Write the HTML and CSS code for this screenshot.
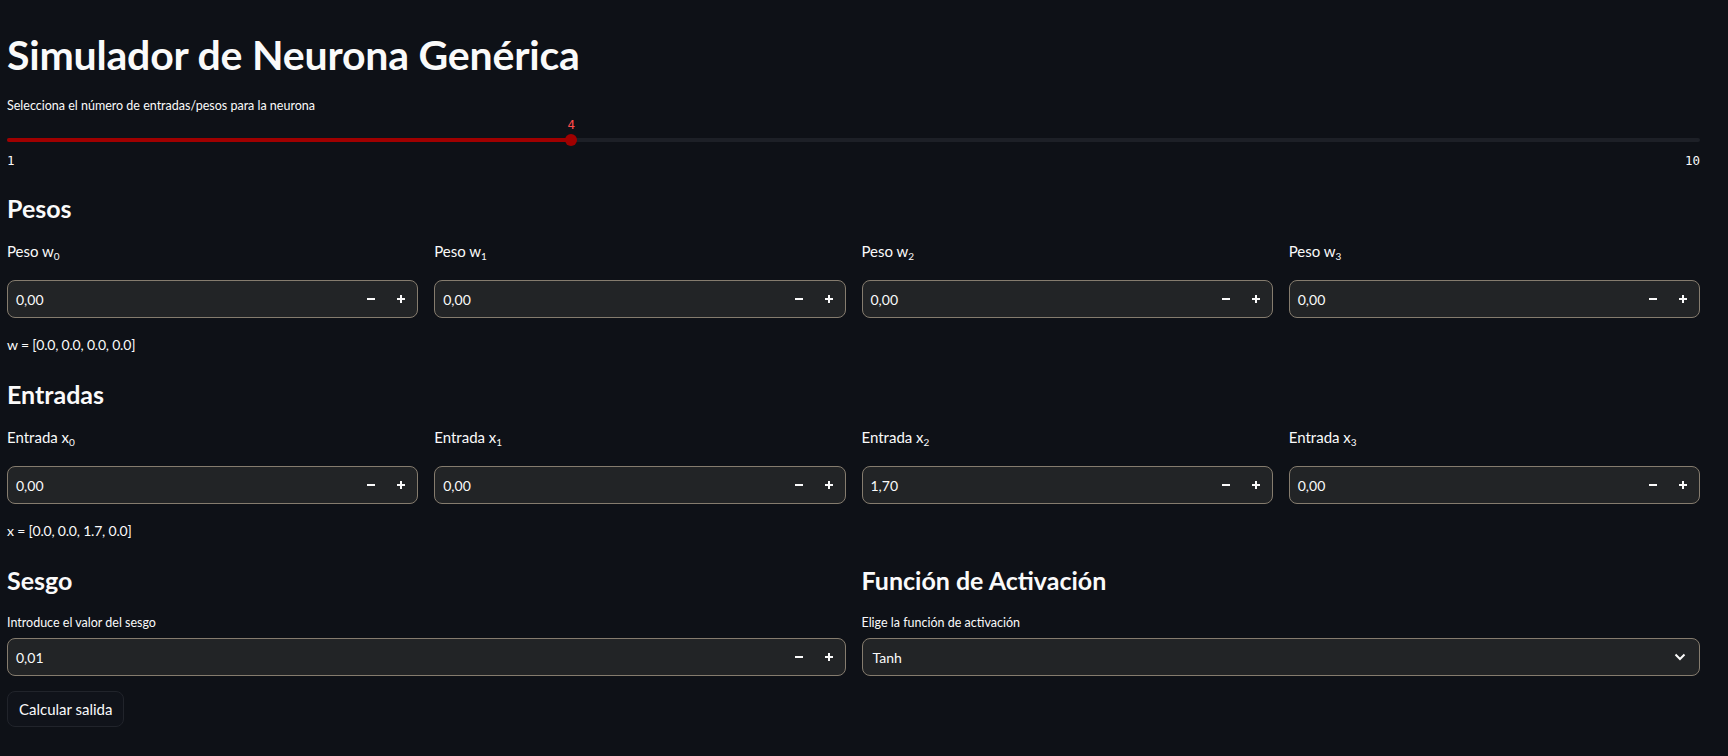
FILE: index.html
```html
<!DOCTYPE html>
<html lang="es">
<head>
<meta charset="utf-8">
<title>Simulador de Neurona Genérica</title>
<link rel="stylesheet" href="styles.css">
</head>
<body>
<main class="app">
  <h1 class="title">Simulador de Neurona Genérica</h1>

  <section class="slider-block">
    <div class="widget-label">Selecciona el número de entradas/pesos para la neurona</div>
    <div class="slider">
      <div class="slider-track">
        <div class="slider-fill" style="width: 33.33%"></div>
        <div class="slider-thumb" style="left: 33.33%">
          <span class="slider-value">4</span>
        </div>
      </div>
    </div>
    <div class="slider-ticks"><span>1</span><span>10</span></div>
  </section>

  <h3 class="section-title">Pesos</h3>
  <div class="grid4">
    <div class="field">
      <div class="md-label">Peso w<sub>0</sub></div>
      <div class="number-input"><span class="value">0,00</span><span class="step minus"><svg viewBox="0 0 10 10"><path d="M1 5h8"/></svg></span><span class="step plus"><svg viewBox="0 0 10 10"><path d="M1 5h8M5 1v8"/></svg></span></div>
    </div>
    <div class="field">
      <div class="md-label">Peso w<sub>1</sub></div>
      <div class="number-input"><span class="value">0,00</span><span class="step minus"><svg viewBox="0 0 10 10"><path d="M1 5h8"/></svg></span><span class="step plus"><svg viewBox="0 0 10 10"><path d="M1 5h8M5 1v8"/></svg></span></div>
    </div>
    <div class="field">
      <div class="md-label">Peso w<sub>2</sub></div>
      <div class="number-input"><span class="value">0,00</span><span class="step minus"><svg viewBox="0 0 10 10"><path d="M1 5h8"/></svg></span><span class="step plus"><svg viewBox="0 0 10 10"><path d="M1 5h8M5 1v8"/></svg></span></div>
    </div>
    <div class="field">
      <div class="md-label">Peso w<sub>3</sub></div>
      <div class="number-input"><span class="value">0,00</span><span class="step minus"><svg viewBox="0 0 10 10"><path d="M1 5h8"/></svg></span><span class="step plus"><svg viewBox="0 0 10 10"><path d="M1 5h8M5 1v8"/></svg></span></div>
    </div>
  </div>
  <p class="vector">w = [0.0, 0.0, 0.0, 0.0]</p>

  <h3 class="section-title">Entradas</h3>
  <div class="grid4">
    <div class="field">
      <div class="md-label">Entrada x<sub>0</sub></div>
      <div class="number-input"><span class="value">0,00</span><span class="step minus"><svg viewBox="0 0 10 10"><path d="M1 5h8"/></svg></span><span class="step plus"><svg viewBox="0 0 10 10"><path d="M1 5h8M5 1v8"/></svg></span></div>
    </div>
    <div class="field">
      <div class="md-label">Entrada x<sub>1</sub></div>
      <div class="number-input"><span class="value">0,00</span><span class="step minus"><svg viewBox="0 0 10 10"><path d="M1 5h8"/></svg></span><span class="step plus"><svg viewBox="0 0 10 10"><path d="M1 5h8M5 1v8"/></svg></span></div>
    </div>
    <div class="field">
      <div class="md-label">Entrada x<sub>2</sub></div>
      <div class="number-input"><span class="value">1,70</span><span class="step minus"><svg viewBox="0 0 10 10"><path d="M1 5h8"/></svg></span><span class="step plus"><svg viewBox="0 0 10 10"><path d="M1 5h8M5 1v8"/></svg></span></div>
    </div>
    <div class="field">
      <div class="md-label">Entrada x<sub>3</sub></div>
      <div class="number-input"><span class="value">0,00</span><span class="step minus"><svg viewBox="0 0 10 10"><path d="M1 5h8"/></svg></span><span class="step plus"><svg viewBox="0 0 10 10"><path d="M1 5h8M5 1v8"/></svg></span></div>
    </div>
  </div>
  <p class="vector">x = [0.0, 0.0, 1.7, 0.0]</p>

  <div class="grid2">
    <div class="col">
      <h3 class="section-title">Sesgo</h3>
      <div class="widget-label">Introduce el valor del sesgo</div>
      <div class="number-input"><span class="value">0,01</span><span class="step minus"><svg viewBox="0 0 10 10"><path d="M1 5h8"/></svg></span><span class="step plus"><svg viewBox="0 0 10 10"><path d="M1 5h8M5 1v8"/></svg></span></div>
    </div>
    <div class="col">
      <h3 class="section-title">Función de Activación</h3>
      <div class="widget-label">Elige la función de activación</div>
      <div class="select"><span class="select-value">Tanh</span><svg class="chevron" viewBox="0 0 12 8"><path d="M1.5 1.5 6 6l4.5-4.5"/></svg></div>
    </div>
  </div>

  <button class="btn" type="button">Calcular salida</button>
</main>
</body>
</html>
```

FILE: styles.css
```css
* { box-sizing: border-box; }

html, body {
  margin: 0;
  padding: 0;
  background: #0e1117;
  color: #fafafa;
  font-family: "Lato", "Noto Sans", sans-serif;
}

.app {
  width: 1728px;
  padding: 24px 28px 40px 7px;
}

.title {
  margin: 0;
  font-size: 41px;
  font-weight: 700;
  line-height: 56px;
  letter-spacing: -0.2px;
  padding-top: 3px;
}

.slider-block {
  margin-top: 14px;
}

.widget-label {
  font-size: 12.5px;
  line-height: 18px;
  height: 18px;
}

.slider {
  height: 33px;
  display: flex;
  align-items: flex-end;
  padding-bottom: 6px;
}

.slider-track {
  position: relative;
  width: 100%;
  height: 4px;
  border-radius: 2px;
  background: #1d2027;
}

.slider-fill {
  height: 100%;
  border-radius: 2px;
  background: #a00000;
}

.slider-thumb {
  position: absolute;
  top: 50%;
  width: 12px;
  height: 12px;
  margin-left: -6px;
  margin-top: -6px;
  border-radius: 50%;
  background: #a00000;
}

.slider-value {
  position: absolute;
  bottom: 14px;
  left: 50%;
  transform: translateX(-50%);
  color: #ff4b4b;
  font-family: "DejaVu Sans Mono", "Liberation Mono", monospace;
  font-size: 12.5px;
  line-height: 14px;
}

.slider-ticks {
  display: flex;
  justify-content: space-between;
  font-family: "DejaVu Sans Mono", "Liberation Mono", monospace;
  font-size: 12.5px;
  line-height: 18px;
  margin-top: 4px;
}

.section-title {
  margin: 0;
  font-size: 25px;
  font-weight: 700;
  line-height: 36px;
}

.slider-block + .section-title { margin-top: 20px; }

.grid4 {
  display: grid;
  grid-template-columns: repeat(4, 1fr);
  gap: 16px;
  margin-top: 14px;
}

.field {
  display: flex;
  flex-direction: column;
}

.md-label {
  font-size: 15px;
  line-height: 22px;
  height: 40px;
}

.md-label sub {
  font-size: 10px;
  line-height: 0;
  vertical-align: -3px;
}

.number-input,
.select {
  display: flex;
  align-items: center;
  height: 38px;
  background: #222426;
  border: 1px solid #857c6e;
  border-radius: 8px;
  font-size: 14px;
}

.number-input .value {
  flex: 1;
  padding-left: 8px;
}

.step {
  display: flex;
  align-items: center;
  justify-content: center;
  width: 30px;
  height: 100%;
}

.step.plus { margin-right: 1px; }

.step svg {
  width: 10px;
  height: 10px;
  stroke: #fafafa;
  stroke-width: 2;
  fill: none;
}

.vector {
  margin: 16px 0 0;
  font-size: 14px;
  letter-spacing: -0.2px;
  line-height: 22px;
}

.vector + .section-title { margin-top: 20px; }
.vector + .grid2 { margin-top: 20px; }

.grid2 {
  display: grid;
  grid-template-columns: 1fr 1fr;
  gap: 16px;
}

.col {
  display: flex;
  flex-direction: column;
}

.col .widget-label {
  margin-top: 16px;
  margin-bottom: 6px;
}

.select {
  justify-content: space-between;
  padding: 0 13px 0 10px;
}

.chevron {
  width: 12px;
  height: 8px;
  stroke: #fafafa;
  stroke-width: 2;
  fill: none;
}

.btn {
  margin-top: 15px;
  height: 36px;
  padding: 0 11px;
  background: #10131a;
  color: #fafafa;
  border: 1px solid #21242b;
  border-radius: 8px;
  font-family: inherit;
  font-size: 15px;
}
```
